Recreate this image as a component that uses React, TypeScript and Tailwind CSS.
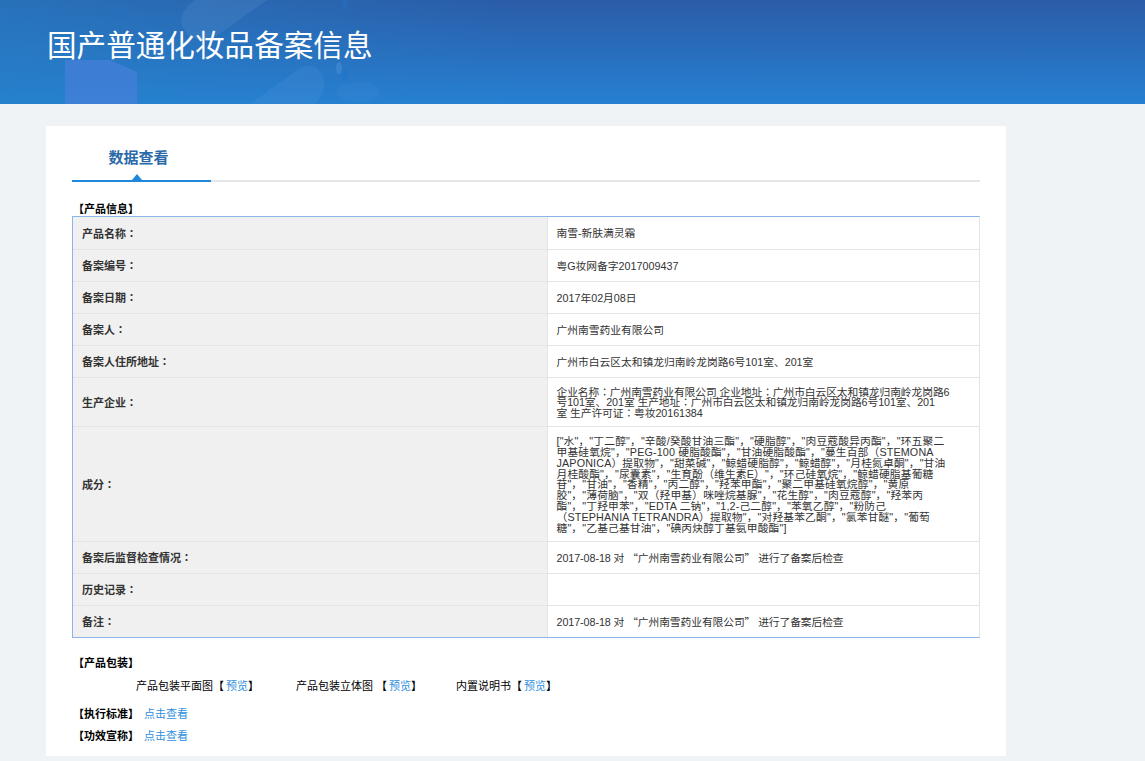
const FONT = "font-['Liberation_Sans','Noto_Sans_CJK_SC',sans-serif]"

type Row = { label: string; value: string; cls?: string }

const ROWS: Row[] = [
  { label: '产品名称：', value: '南雪-新肤满灵霜' },
  { label: '备案编号：', value: '粤G妆网备字2017009437' },
  { label: '备案日期：', value: '2017年02月08日' },
  { label: '备案人：', value: '广州南雪药业有限公司' },
  { label: '备案人住所地址：', value: '广州市白云区太和镇龙归南岭龙岗路6号101室、201室' },
  {
    label: '生产企业：',
    cls: 'tracking-[-0.08px]',
    value: '企业名称：广州南雪药业有限公司 企业地址：广州市白云区太和镇龙归南岭龙岗路6\n号101室、201室 生产地址：广州市白云区太和镇龙归南岭龙岗路6号101室、201\n室 生产许可证：粤妆20161384',
  },
  {
    label: '成分：',
    cls: 'tracking-[0.15px]',
    value: '["水"，"丁二醇"，"辛酸/癸酸甘油三酯"，"硬脂醇"，"肉豆蔻酸异丙酯"，"环五聚二\n甲基硅氧烷"，"PEG-100 硬脂酸酯"，"甘油硬脂酸酯"，"蔓生百部（STEMONA\nJAPONICA）提取物"，"甜菜碱"，"鲸蜡硬脂醇"，"鲸蜡醇"，"月桂氮卓酮"，"甘油\n月桂酸酯"，"尿囊素"，"生育酚（维生素E）"，"环己硅氧烷"，"鲸蜡硬脂基葡糖\n苷"，"甘油"，"香精"，"丙二醇"，"羟苯甲酯"，"聚二甲基硅氧烷醇"，"黄原\n胶"，"薄荷脑"，"双（羟甲基）咪唑烷基脲"，"花生醇"，"肉豆蔻醇"，"羟苯丙\n酯"，"丁羟甲苯"，"EDTA 二钠"，"1,2-己二醇"，"苯氧乙醇"，"粉防己\n（STEPHANIA TETRANDRA）提取物"，"对羟基苯乙酮"，"氯苯甘醚"，"葡萄\n糖"，"乙基己基甘油"，"碘丙炔醇丁基氨甲酸酯"]',
  },
  { label: '备案后监督检查情况：', cls: 'tracking-[-0.08px]', value: '2017-08-18 对 “广州南雪药业有限公司” 进行了备案后检查' },
  { label: '历史记录：', value: '' },
  { label: '备注：', cls: 'tracking-[-0.08px]', value: '2017-08-18 对 “广州南雪药业有限公司” 进行了备案后检查' },
]

// colons sit centred in the cell text and the curly quotes are full width
function CellText({ text }: { text: string }) {
  return (
    <>
      {text.split(/([：“”])/).map((part, i) => {
        if (part === '：') return <span key={i} className="font-['Noto_Sans_CJK_TC']">{part}</span>
        if (part === '“' || part === '”') return <span key={i} className="font-['Noto_Sans_CJK_SC']">{part}</span>
        return part
      })}
    </>
  )
}

function HeaderArt() {
  return (
    <svg className="absolute inset-0 w-full h-full" viewBox="0 0 1145 104" preserveAspectRatio="none">
      <path d="M65 60 L110 60 L137 72 L137 104 L65 104 Z" fill="#4a7fdc" opacity="0.65" />
      <path d="M195 0 L267 0 L215 37 Q190 46 182 25 Q178 12 195 0 Z" fill="#6a9ad4" opacity="0.2" />
      <path d="M250 104 L300 68 Q318 60 324 80 Q326 92 315 104 Z" fill="#6aa4e6" opacity="0.14" />
      <ellipse cx="339" cy="68" rx="3" ry="6" fill="#5b9ae0" opacity="0.35" />
      <ellipse cx="345" cy="75" rx="2.5" ry="5" fill="#1d74c8" opacity="0.6" />
      <ellipse cx="345" cy="3" rx="2.5" ry="5" fill="#1d74c8" opacity="0.5" />
      <ellipse cx="358" cy="92" rx="22" ry="10" fill="#5b9ae0" opacity="0.1" />
    </svg>
  )
}

export default function App() {
  return (
    <div className={`min-h-[761px] bg-[#eff3f6] ${FONT}`}>
      <header className="relative h-[104px] overflow-hidden bg-[linear-gradient(to_right,rgba(38,130,200,0.55),rgba(38,130,200,0)_45%),linear-gradient(to_bottom,#2b5ca8,#2680d2)]">
        <HeaderArt />
        <h1 className="relative pl-[47px] pt-[27px] text-[29.6px] leading-[38px] text-white">国产普通化妆品备案信息</h1>
      </header>

      <main className="ml-[46px] mt-[22px] w-[960px] h-[630px] bg-white px-[26px] pt-[12px] text-[10.75px] text-[#333]">
        <div className="h-[44px] border-b-2 border-[#e3e6e9]">
          <div className="relative h-[42px] w-[133px] border-b-2 border-[#2088dc] pr-[6px] text-center text-[15px] font-bold leading-[39px] text-[#2a6aa8] box-content">
            数据查看
            <span className="absolute bottom-0 left-[60px] w-0 h-0 border-x-[5px] border-b-[6px] border-x-transparent border-b-[#2088dc]" />
          </div>
        </div>

        <div className="mt-[20px] h-[14px] pl-[1px] text-[11px] font-bold leading-[15px] text-black">【产品信息】</div>

        <div className="w-[908px] border-y border-l border-r border-y-[#8db4e6] border-l-[#8db4e6] border-r-[#e4e4e4]">
          <table className="w-full table-fixed border-collapse">
            <colgroup>
              <col className="w-[474px]" />
              <col />
            </colgroup>
            <tbody>
              {ROWS.map(row => (
                <tr key={row.label} className="border-b border-[#e4e4e4] last:border-b-0">
                  <td className="h-[32px] bg-[#f0f0f0] pl-[9px] pt-[2px] text-[11px] font-bold leading-[11px] text-[#333]">
                    <CellText text={row.label} />
                  </td>
                  <td className={`whitespace-pre-line border-l border-[#e4e4e4] pb-[7px] pl-[9px] pt-[9px] leading-[10.85px] text-[#333] ${row.cls ?? ''}`}>
                    <CellText text={row.value} />
                  </td>
                </tr>
              ))}
            </tbody>
          </table>
        </div>

        <div className="mt-[18px] pl-[1px] text-[11px] font-bold leading-[15px] text-black">【产品包装】</div>
        <div className="mt-[8px] flex pl-[64px] text-[11px] leading-[15px] text-black">
          <span className="w-[160px]">产品包装平面图【<a className="ml-[2px] text-[#2f8fdc]">预览</a>】</span>
          <span className="w-[160px]">产品包装立体图 【<a className="ml-[2px] text-[#2f8fdc]">预览</a>】</span>
          <span>内置说明书【<a className="ml-[2px] text-[#2f8fdc]">预览</a>】</span>
        </div>
        <div className="mt-[13px] flex gap-[5px] pl-[1px] text-[11px] leading-[15px]">
          <span className="font-bold text-black">【执行标准】</span>
          <a className="text-[#2f8fdc]">点击查看</a>
        </div>
        <div className="mt-[7px] flex gap-[5px] pl-[1px] text-[11px] leading-[15px]">
          <span className="font-bold text-black">【功效宣称】</span>
          <a className="text-[#2f8fdc]">点击查看</a>
        </div>
      </main>
    </div>
  )
}
